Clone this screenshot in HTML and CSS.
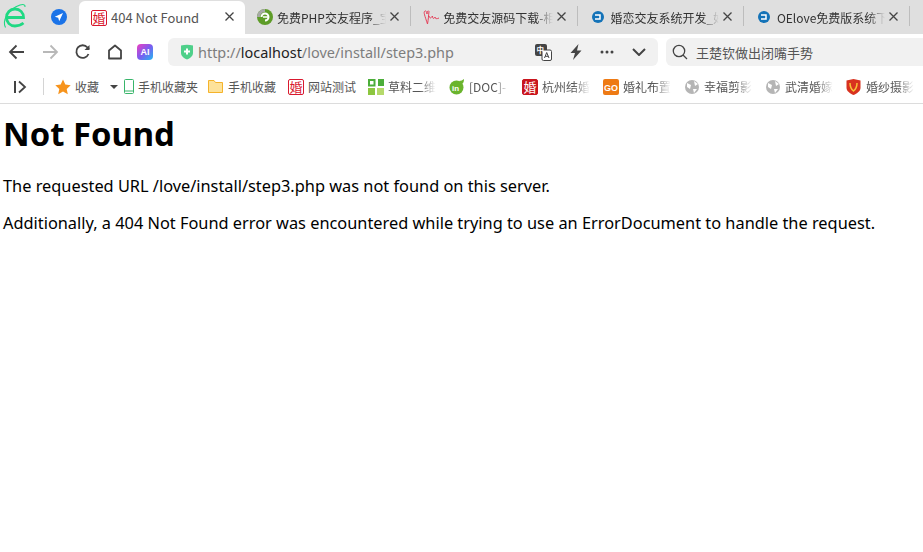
FILE: index.html
```html
<!DOCTYPE html>
<html lang="zh">
<head>
<meta charset="utf-8">
<title>404 Not Found</title>
<link rel="stylesheet" href="styles.css">
</head>
<body>
<header class="browser">
  <div class="tabbar">
    <svg class="logo" width="28" height="34" viewBox="0 0 28 34"><path d="M7 17.500H23.500C23.500 12.500 20 9 15 9C10 9 6.500 12.800 6.500 17.500C6.500 22.500 10 26 15 26C18 26 21 25 23.500 23" fill="none" stroke="#1fd983" stroke-width="2.800"/><path d="M5.500 27.500C2 21 8 9 20 5C23 4 25.500 4.500 25 7" fill="none" stroke="#1fd983" stroke-width="1.100"/></svg>
    <div class="pin"><svg width="16" height="16" viewBox="0 0 16 16"><circle cx="8" cy="8" r="8" fill="#1a73e8"/><path d="M12 4L3.800 7.800L7.200 8.800L8.200 12.200Z" fill="#fff"/></svg></div>
    <div class="tab tab-active">
      <span class="hun fav">婚</span>
      <span class="tab-title">404 Not Found</span>
      <svg class="close" width="9" height="9" viewBox="0 0 9 9"><path d="M.5 .5L8.500 8.500M8.500 .5L.5 8.500" stroke="#444" stroke-width="1.300"/></svg>
    </div>
    <div class="tab">
      <svg class="fav" width="16" height="16" viewBox="0 0 16 16"><circle cx="8" cy="8" r="8" fill="#5e9c28"/><path d="M0 8A8 8 0 0 1 8 0V3A5 5 0 0 0 3 8Z" fill="#a8a8a8"/><path d="M4.500 8A3.500 3.500 0 1 1 8 11.500" fill="none" stroke="#fff" stroke-width="2"/><path d="M6 8H11" stroke="#fff" stroke-width="1.500"/></svg>
      <span class="tab-title">免费PHP交友程序_宝</span>
      <svg class="close" width="9" height="9" viewBox="0 0 9 9"><path d="M.5 .5L8.500 8.500M8.500 .5L.5 8.500" stroke="#444" stroke-width="1.300"/></svg>
    </div>
    <div class="tab">
      <svg class="fav fav-wide" width="18" height="16" viewBox="0 0 18 16"><path d="M2 2C0 3 2 7 4.500 15C5.500 10 5.500 6 6 2.500C5 1 4 2.500 4 5C4 3 3 1.500 2 2ZM6 7C7 10 8 9 9.500 7C9.500 10 11 10 12 8C12 10 14 10 16 9" fill="none" stroke="#e5405a"/></svg>
      <span class="tab-title">免费交友源码下载-相</span>
      <svg class="close" width="9" height="9" viewBox="0 0 9 9"><path d="M.5 .5L8.500 8.500M8.500 .5L.5 8.500" stroke="#444" stroke-width="1.300"/></svg>
    </div>
    <div class="tab">
      <svg class="fav fav-small" width="12" height="12" viewBox="0 0 12 12"><circle cx="6" cy="6" r="6" fill="#1473b8"/><path d="M3 4H8V8H3" fill="none" stroke="#fff" stroke-width="1.500"/></svg>
      <span class="tab-title">婚恋交友系统开发_好</span>
      <svg class="close" width="9" height="9" viewBox="0 0 9 9"><path d="M.5 .5L8.500 8.500M8.500 .5L.5 8.500" stroke="#444" stroke-width="1.300"/></svg>
    </div>
    <div class="tab">
      <svg class="fav fav-small" width="12" height="12" viewBox="0 0 12 12"><circle cx="6" cy="6" r="6" fill="#1473b8"/><path d="M3 4H8V8H3" fill="none" stroke="#fff" stroke-width="1.500"/></svg>
      <span class="tab-title">OElove免费版系统下</span>
      <svg class="close" width="9" height="9" viewBox="0 0 9 9"><path d="M.5 .5L8.500 8.500M8.500 .5L.5 8.500" stroke="#444" stroke-width="1.300"/></svg>
    </div>
  </div>
  <div class="toolbar">
    <svg class="nav" width="18" height="18" viewBox="0 0 18 18"><path d="M16 9H2M8.500 2.500L2 9L8.500 15.500" fill="none" stroke="#444" stroke-width="1.800"/></svg>
    <svg class="nav" width="18" height="18" viewBox="0 0 18 18"><path d="M2 9H16M9.500 2.500L16 9L9.500 15.500" fill="none" stroke="#b8b8b8" stroke-width="1.800"/></svg>
    <svg class="nav" width="18" height="18" viewBox="0 0 18 18"><path d="M14.500 11A6.300 6.300 0 1 1 13.500 4.500L15 6" fill="none" stroke="#444" stroke-width="1.800"/><path d="M15.500 2V7H10.500Z" fill="#444"/></svg>
    <svg class="nav" width="18" height="18" viewBox="0 0 18 18"><path d="M3 15.500V7.500L9 2.500L15 7.500V15.500Z" fill="none" stroke="#444" stroke-width="1.800" stroke-linejoin="round"/></svg>
    <div class="ai">AI</div>
    <div class="address">
      <svg width="14" height="16" viewBox="0 0 14 16"><path d="M1 1.500Q7 0 13 1.500V9C13 12 10 14.500 7 15.500C4 14.500 1 12 1 9Z" fill="#4fd08a"/><path d="M7 4.500V10.500M4 7.500H10" stroke="#fff" stroke-width="2"/></svg>
      <span class="url">http://<b>localhost</b>/love/install/step3.php</span>
      <div class="addr-tools">
        <svg width="17" height="17" viewBox="0 0 17 17"><rect x="0" y="0" width="12" height="12" rx="2" fill="#444"/><rect x="7" y="6" width="9.500" height="10.500" rx="1.500" fill="#fff" stroke="#444"/><path d="M9.500 14L11.700 8.500L14 14M10.300 12.300H13.200" fill="none" stroke="#444"/><text x="1.500" y="9" font-size="7.500" font-weight="700" fill="#fff" font-family="Noto Sans CJK SC">中</text></svg>
        <svg width="14" height="16" viewBox="0 0 14 16"><path d="M9.500 0L1.500 9H6L4 16L12.500 6.500H8Z" fill="#444"/></svg>
        <svg width="14" height="4" viewBox="0 0 14 4"><circle cx="2" cy="2" r="1.500" fill="#444"/><circle cx="7" cy="2" r="1.500" fill="#444"/><circle cx="12" cy="2" r="1.500" fill="#444"/></svg>
        <svg class="chevron" width="14" height="8" viewBox="0 0 14 8"><path d="M1 1L7 7L13 1" fill="none" stroke="#444" stroke-width="2"/></svg>
      </div>
    </div>
    <div class="search">
      <svg width="16" height="16" viewBox="0 0 16 16"><circle cx="7" cy="7" r="5.700" fill="none" stroke="#444" stroke-width="1.300"/><path d="M11 11L15 15" stroke="#444" stroke-width="1.300"/></svg>
      <span>王楚钦做出闭嘴手势</span>
    </div>
  </div>
  <div class="bookmarks">
    <svg class="sidebar" width="14" height="14" viewBox="0 0 14 14"><path d="M2 1V13" stroke="#444" stroke-width="2"/><path d="M6 1.500L12 7L6 12.500" fill="none" stroke="#444" stroke-width="1.800"/></svg>
    <span class="divider"></span>
    <div class="bm bm-fav">
      <svg width="16" height="16" viewBox="0 0 16 16"><path d="M8 0.500L10.300 5.500L15.700 6.200L11.700 9.900L12.800 15.300L8 12.600L3.200 15.300L4.300 9.900L.3 6.200L5.700 5.500Z" fill="#f7941d"/></svg>
      <span>收藏</span><i class="caret"></i>
    </div>
    <div class="bm bm-tight"><svg width="10" height="15" viewBox="0 0 10 15"><rect x=".5" y=".5" width="9" height="14" rx="1" fill="#fff" stroke="#38b56a"/><path d="M1 12H9" stroke="#38b56a"/></svg><span>手机收藏夹</span></div>
    <div class="bm bm-mid bm-loose"><svg width="15" height="13" viewBox="0 0 15 13"><path d="M.5 12.500V.5H6L7.500 2.500H14.500V12.500Z" fill="#fde29a" stroke="#f5b32a"/></svg><span>手机收藏</span></div>
    <div class="bm bm-mid"><span class="hun">婚</span><span>网站测试</span></div>
    <div class="bm"><svg width="16" height="16" viewBox="0 0 16 16"><rect x="1" y="1" width="5.500" height="5.500" fill="none" stroke="#4cae3a" stroke-width="2"/><rect x="10" y="0" width="6" height="7" fill="#4cae3a"/><rect x="0" y="9" width="7" height="7" fill="#8cc63f"/><rect x="9" y="9" width="7" height="7" fill="#b5d96b"/></svg><span class="fade">草料二维</span></div>
    <div class="bm"><svg width="16" height="16" viewBox="0 0 16 16"><circle cx="7.500" cy="8.500" r="7" fill="#6ab42d"/><path d="M10 2Q13 2 15 0Q15 4 13 5Z" fill="#6ab42d"/><text x="3" y="12" font-size="8" font-weight="700" fill="#fff" font-family="Liberation Sans">in</text></svg><span class="fade fade-short">[DOC]-</span></div>
    <div class="bm"><span class="hun hun-solid">婚</span><span class="fade">杭州结婚</span></div>
    <div class="bm bm-far"><svg width="16" height="16" viewBox="0 0 16 16"><rect width="16" height="16" rx="2" fill="#ee7a14"/><text x="1" y="12" font-size="9" font-weight="700" fill="#fff" font-family="Liberation Sans">GO</text></svg><span class="fade">婚礼布置</span></div>
    <div class="bm bm-far bm-loose"><svg width="14" height="14" viewBox="0 0 14 14"><circle cx="7" cy="7" r="7" fill="#b5b5b5"/><path d="M2 3L6 5L5 9L2 7ZM9 1L13 4L10 6ZM8 9L12 9L9 13Z" fill="#fff"/></svg><span class="fade">幸福剪影</span></div>
    <div class="bm bm-loose"><svg width="14" height="14" viewBox="0 0 14 14"><circle cx="7" cy="7" r="7" fill="#b5b5b5"/><path d="M2 3L6 5L5 9L2 7ZM9 1L13 4L10 6ZM8 9L12 9L9 13Z" fill="#fff"/></svg><span class="fade">武清婚嫁</span></div>
    <div class="bm bm-loose"><svg width="15" height="16" viewBox="0 0 15 16"><path d="M.5 1.500L7.500 0L14.500 1.500V9C14.500 12 11 14.500 7.500 16C4 14.500 .5 12 .5 9Z" fill="#d8321f"/><path d="M4 4C4 8 5 10 7.500 12C10 10 11 8 11 4" fill="none" stroke="#f7c33a" stroke-width="1.500"/></svg><span class="fade">婚纱摄影</span></div>
  </div>
</header>
<main class="page">
  <h1>Not Found</h1>
  <p>The requested URL /love/install/step3.php was not found on this server.</p>
  <p>Additionally, a 404 Not Found error was encountered while trying to use an ErrorDocument to handle the request.</p>
</main>
</body>
</html>
```
FILE: styles.css
```css
* { box-sizing: border-box; }
html, body { margin: 0; height: 100%; overflow: hidden; background: #fff; }
body { font-family: "Noto Sans", "Noto Sans CJK SC", sans-serif; color: #000; }
.browser { font-family: "Noto Sans CJK SC", "Noto Sans", sans-serif; }

.tabbar { display: flex; height: 34px; background: #dfdfdf; align-items: stretch; }
.logo { flex: none; }
.pin { flex: none; width: 51px; display: flex; align-items: center; padding-left: 23px; }
.tab { flex: none; width: 166.300px; display: flex; align-items: center; padding: 0 12px 0 12px; position: relative; color: #333; font-size: 12px; }
.tab::after { content: ""; position: absolute; right: 0; top: 6px; height: 20px; width: 1px; background: #bdbdbd; }
.tab-active { width: 166px; padding-right: 11px; margin-top: 1px; background: #fff; border-radius: 6px 6px 0 0; color: #555; font-size: 13px; }
.tab-active::after { display: none; }
.fav { flex: none; margin-right: 4px; }
.fav-wide { margin-right: 2px; }
.fav-small { margin: 0 7px 0 2px; }
.tab-title { flex: 1; min-width: 0; overflow: hidden; white-space: nowrap; -webkit-mask-image: linear-gradient(90deg, #000 85%, transparent); mask-image: linear-gradient(90deg, #000 85%, transparent); }
.tab-active .tab-title { -webkit-mask-image: none; mask-image: none; }
.close { flex: none; margin: 0 0 2px 4px; }
.hun { flex: none; width: 16px; height: 16px; border: 1px solid #d9192f; border-radius: 2px; background: #fff; color: #d9192f; font: 13px/14px "Noto Sans CJK SC", sans-serif; text-align: center; overflow: hidden; display: block; }
.hun-solid { background: #c9151e; color: #fff; border-color: #c9151e; }

.toolbar { display: flex; height: 36px; align-items: center; padding: 0 0 0 8px; }
.nav { flex: none; margin-right: 15px; }
.nav:nth-of-type(3) { margin-right: 14px; }
.nav:nth-of-type(4) { margin-right: 13px; }
.ai { flex: none; width: 16px; height: 16px; border-radius: 4px; background: linear-gradient(135deg, #f03fc0, #7b5cf0 50%, #22b8f0); color: #fff; font: 700 9px/16px "Liberation Sans", sans-serif; text-align: center; margin-right: 15px; }
.address { flex: none; width: 490px; height: 28px; background: #f1f1f1; border-radius: 6px; display: flex; align-items: center; padding: 0 12px; margin-right: 8px; }
.url { font: 14.450px "Noto Sans", sans-serif; color: #7d7d7d; margin-left: 4px; white-space: nowrap; }
.url b { font-weight: 400; color: #222; }
.addr-tools { margin-left: auto; display: flex; align-items: center; gap: 17px; }
.chevron { margin-left: 1px; }
.search { flex: 1; height: 28px; background: #f1f1f1; border-radius: 6px 0 0 6px; display: flex; align-items: center; padding-left: 6px; gap: 8px; font-size: 13px; color: #555; }

.bookmarks { display: flex; height: 34px; align-items: center; padding: 0 0 0 13px; border-bottom: 1px solid #dcdcdc; font-size: 12px; color: #555; white-space: nowrap; overflow: hidden; }
.sidebar { flex: none; margin-right: 16px; }
.divider { flex: none; width: 1px; height: 17px; background: #d4d4d4; margin-right: 11px; }
.bm { flex: none; display: flex; align-items: center; gap: 4px; margin-right: 13px; }
.bm span:not(.hun) { display: block; }
.bm-fav { margin-right: 6px; }
.bm-tight { margin-right: 10px; }
.bm-mid { margin-right: 12px; }
.bm-far { margin-right: 14px; }
.bm-loose { gap: 5px; }
.caret { width: 0; height: 0; border: 4px solid transparent; border-top: 4px solid #444; border-bottom: 0; margin-left: 7px; }
.fade { width: 48px; overflow: hidden; -webkit-mask-image: linear-gradient(90deg, #000 65%, transparent); mask-image: linear-gradient(90deg, #000 65%, transparent); }
.fade-short { width: 40px; }

.page { padding: 0 3px; }
h1 { font-size: 32.800px; font-weight: 700; line-height: 44px; margin: 8px 0 19px; }
p { font-size: 16.350px; line-height: 22px; margin: 0 0 15px; }
```
